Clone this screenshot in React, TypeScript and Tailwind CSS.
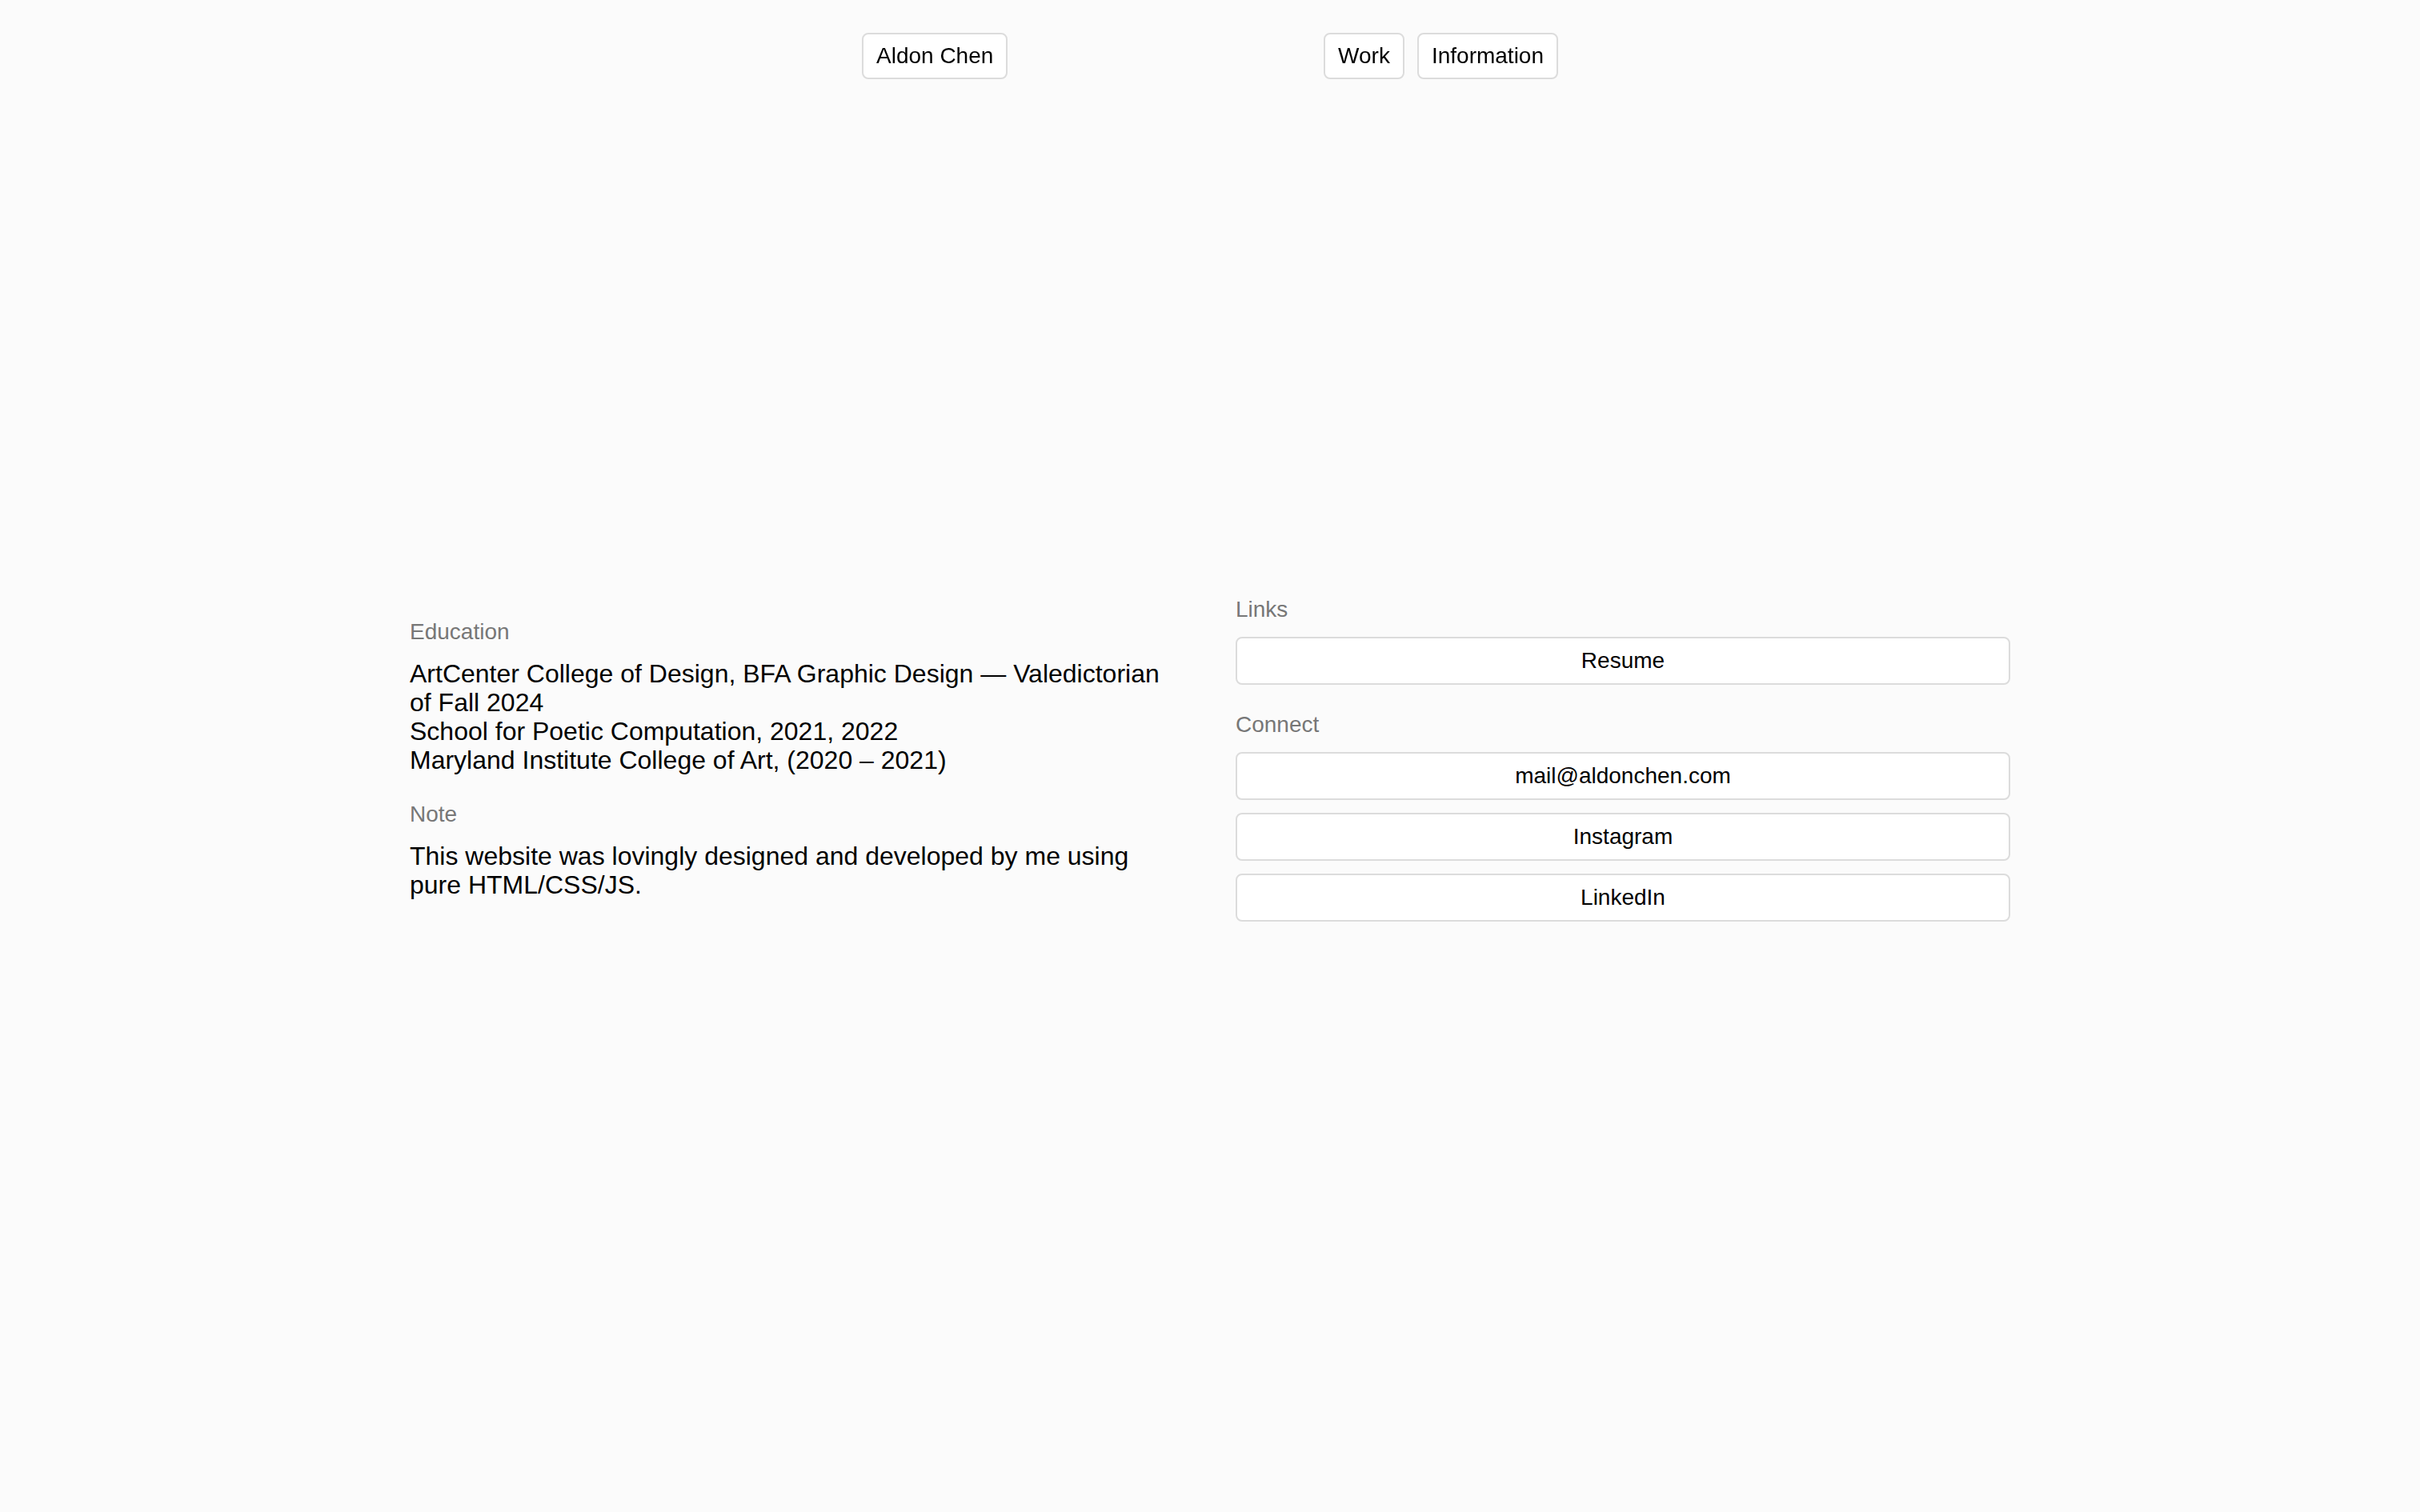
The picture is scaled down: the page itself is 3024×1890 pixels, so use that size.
const education = [
  "ArtCenter College of Design, BFA Graphic Design — Valedictorian of Fall 2024",
  "School for Poetic Computation, 2021, 2022",
  "Maryland Institute College of Art, (2020 – 2021)",
];

const connect = ["mail@aldonchen.com", "Instagram", "LinkedIn"];

function Pill({ children }: { children: React.ReactNode }) {
  return (
    <a className="flex h-[58px] items-center rounded-[8px] border-2 border-[#dcdcdc] bg-white px-[16px] text-[28px] leading-[32px] text-black">
      {children}
    </a>
  );
}

function Label({ children }: { children: React.ReactNode }) {
  return <p className="mb-[18px] text-[28px] leading-[32px] text-[#777777]">{children}</p>;
}

function LinkButton({ children }: { children: React.ReactNode }) {
  return (
    <a className="flex h-[60px] w-full items-center justify-center rounded-[8px] border-2 border-[#dcdcdc] bg-white text-[28px] leading-[32px] text-black">
      {children}
    </a>
  );
}

export default function App() {
  return (
    <div
      className="min-h-screen bg-[#fbfbfb] text-black"
      style={{ fontFamily: '"Liberation Sans", Arial, sans-serif' }}
    >
      {/* Fixed header */}
      <header className="fixed top-[41px] right-0 left-0 z-10 flex justify-center">
        <nav className="flex w-[870px] justify-between">
          <Pill>Aldon Chen</Pill>
          <div className="flex gap-[16px]">
            <Pill>Work</Pill>
            <Pill>Information</Pill>
          </div>
        </nav>
      </header>

      <main className="flex h-screen items-center justify-center pt-[8px]">
        <div className="grid w-[2000px] grid-cols-2 items-center gap-[64px]">
          {/* Left column */}
          <div className="flex flex-col gap-[34px]">
            <section>
              <Label>Education</Label>
              <div className="text-[32px] leading-[36px]">
                {education.map((line) => (
                  <p key={line}>{line}</p>
                ))}
              </div>
            </section>
            <section>
              <Label>Note</Label>
              <p className="text-[32px] leading-[36px]">
                This website was lovingly designed and developed by me using pure HTML/CSS/JS.
              </p>
            </section>
          </div>

          {/* Right column */}
          <div className="flex flex-col gap-[34px]">
            <section>
              <Label>Links</Label>
              <LinkButton>Resume</LinkButton>
            </section>
            <section>
              <Label>Connect</Label>
              <div className="flex flex-col gap-[16px]">
                {connect.map((item) => (
                  <LinkButton key={item}>{item}</LinkButton>
                ))}
              </div>
            </section>
          </div>
        </div>
      </main>
    </div>
  );
}
